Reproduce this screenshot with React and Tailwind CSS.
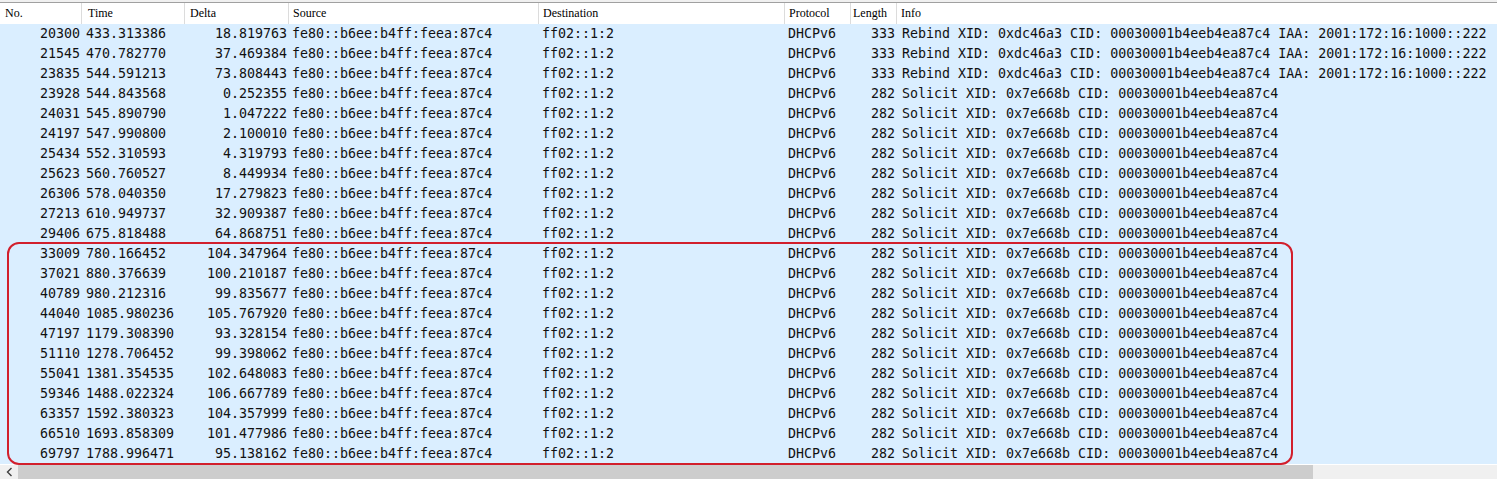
import React from "react";

const rows = [
  ["20300", "433.313386", "18.819763", "R"],
  ["21545", "470.782770", "37.469384", "R"],
  ["23835", "544.591213", "73.808443", "R"],
  ["23928", "544.843568", "0.252355", "S"],
  ["24031", "545.890790", "1.047222", "S"],
  ["24197", "547.990800", "2.100010", "S"],
  ["25434", "552.310593", "4.319793", "S"],
  ["25623", "560.760527", "8.449934", "S"],
  ["26306", "578.040350", "17.279823", "S"],
  ["27213", "610.949737", "32.909387", "S"],
  ["29406", "675.818488", "64.868751", "S"],
  ["33009", "780.166452", "104.347964", "S"],
  ["37021", "880.376639", "100.210187", "S"],
  ["40789", "980.212316", "99.835677", "S"],
  ["44040", "1085.980236", "105.767920", "S"],
  ["47197", "1179.308390", "93.328154", "S"],
  ["51110", "1278.706452", "99.398062", "S"],
  ["55041", "1381.354535", "102.648083", "S"],
  ["59346", "1488.022324", "106.667789", "S"],
  ["63357", "1592.380323", "104.357999", "S"],
  ["66510", "1693.858309", "101.477986", "S"],
  ["69797", "1788.996471", "95.138162", "S"],
];

const cols = "grid grid-cols-[82px_103px_104px_250px_246px_66px_46px_1fr]";

export default function App() {
  return (
    <div className="relative w-[1497px] h-[479px] overflow-hidden bg-white flex flex-col">
      <div className="h-[2px] bg-[#f0f0f0]" />
      <div className="h-px bg-[#a0a0a0]" />
      <div className={`${cols} h-[21px] bg-white text-[12px] text-black leading-[20px]`} style={{ fontFamily: '"Liberation Serif", serif' }}>
        <div className="pl-[5px] border-r border-[#dcdcdc]">No.</div>
        <div className="pl-[6px] border-r border-[#dcdcdc]">Time</div>
        <div className="pl-[5px] border-r border-[#dcdcdc]">Delta</div>
        <div className="pl-[4px] border-r border-[#dcdcdc]">Source</div>
        <div className="pl-[4px] border-r border-[#dcdcdc]">Destination</div>
        <div className="pl-[4px] border-r border-[#dcdcdc]">Protocol</div>
        <div className="pl-[2px] border-r border-[#dcdcdc]">Length</div>
        <div className="pl-[4px]">Info</div>
      </div>
      <div className="flex flex-col text-[13.3px] leading-[20px] text-[#111]" style={{ fontFamily: '"DejaVu Sans Mono", monospace' }}>
        {rows.map((r) => (
          <div key={r[0]} className={`${cols} h-[20px] bg-[#daeeff] whitespace-nowrap`}>
            <div className="text-right pr-[2px]">{r[0]}</div>
            <div className="pl-[4px]">{r[1]}</div>
            <div className="text-right pr-[2px]">{r[2]}</div>
            <div className="pl-[3px]">fe80::b6ee:b4ff:feea:87c4</div>
            <div className="pl-[3px]">ff02::1:2</div>
            <div className="pl-[3px]">DHCPv6</div>
            <div className="text-right pr-[2px]">{r[3] === "R" ? "333" : "282"}</div>
            <div className="pl-[5px] overflow-visible">
              {r[3] === "R"
                ? "Rebind XID: 0xdc46a3 CID: 00030001b4eeb4ea87c4 IAA: 2001:172:16:1000::222"
                : "Solicit XID: 0x7e668b CID: 00030001b4eeb4ea87c4"}
            </div>
          </div>
        ))}
      </div>
      <div className="flex-1 flex bg-[#f0f0f0] mt-px">
        <div className="w-[18px] flex items-center justify-center">
          <svg width="7" height="10" viewBox="0 0 7 10">
            <path d="M5.5 1 L1.5 5 L5.5 9" stroke="#404040" strokeWidth="1.4" fill="none" />
          </svg>
        </div>
        <div className="w-[1295px] bg-[#cdcdcd]" />
        <div className="flex-1" />
      </div>
      <div className="absolute left-[7px] top-[242px] w-[1286px] h-[223px] border-2 border-[#d21f2c] rounded-[12px] pointer-events-none" />
    </div>
  );
}
